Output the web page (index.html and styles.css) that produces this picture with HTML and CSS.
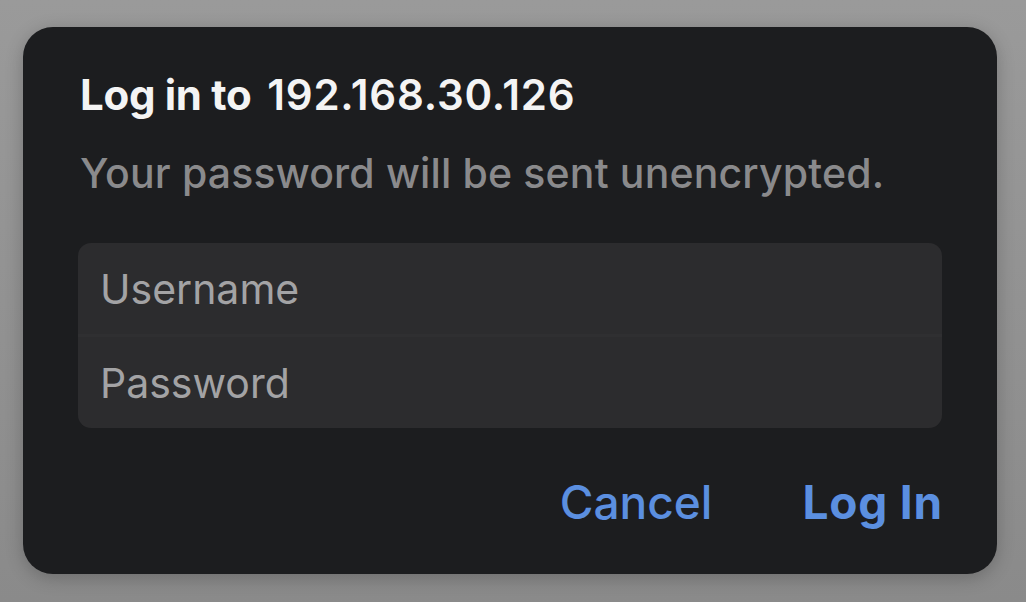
FILE: index.html
```html
<!DOCTYPE html>
<html>
<head>
<meta charset="utf-8">
<link rel="stylesheet" href="styles.css">
</head>
<body>
<div class="dialog">
  <h1 class="title"><span class="t1">Log in to</span> <span class="t2">192.168.30.126</span></h1>
  <p class="subtitle">Your password will be sent unencrypted.</p>
  <div class="fields">
    <div class="field">Username</div>
    <div class="divider"></div>
    <div class="field">Password</div>
  </div>
  <div class="actions">
    <span class="btn cancel">Cancel</span>
    <span class="btn login">Log In</span>
  </div>
</div>
</body>
</html>
```
FILE: styles.css
```css
html, body {
  margin: 0;
  padding: 0;
  width: 1026px;
  height: 602px;
  overflow: hidden;
  background: linear-gradient(#9a9a9a, #8a8a8a);
  font-family: "Inter", "Liberation Sans", sans-serif;
}
body {
  padding: 27px 0 0 23px;
  box-sizing: border-box;
}
.dialog {
  width: 974px;
  height: 547px;
  box-sizing: border-box;
  background: #1c1d1f;
  border-radius: 30px;
  box-shadow: 0 4px 18px rgba(0,0,0,0.22);
  padding: 0 55px 0 57px;
  display: flex;
  flex-direction: column;
}
.title {
  margin: 43px 0 0 0;
  color: #f4f4f4;
  font-size: 42px;
  line-height: 50px;
  font-weight: 700;
  letter-spacing: -0.3px;
}
.title .t2 {
  font-weight: 600;
  letter-spacing: 0.8px;
  margin-left: 6px;
}
.subtitle {
  margin: 30px 0 0 0;
  color: #8a8a8c;
  font-size: 41px;
  line-height: 46px;
  font-weight: 500;
  letter-spacing: 0.15px;
}
.fields {
  margin: 47px 0 0 -2px;
  background: #2c2c2e;
  border-radius: 13px;
  height: 185px;
  display: flex;
  flex-direction: column;
}
.field {
  flex: 1;
  display: flex;
  align-items: center;
  padding: 0 22px;
  color: #a3a3a5;
  font-size: 41px;
  font-weight: 400;
}
.divider {
  height: 3px;
  background: #2f2f31;
}
.actions {
  display: flex;
  justify-content: flex-end;
  align-items: baseline;
  gap: 90px;
  margin-top: 49px;
}
.btn {
  color: #5b8fe0;
  font-size: 46px;
  line-height: 50px;
}
.cancel { font-weight: 450; }
.login {
  font-weight: 700;
  letter-spacing: 0.8px;
  margin-right: -1px;
}
```
